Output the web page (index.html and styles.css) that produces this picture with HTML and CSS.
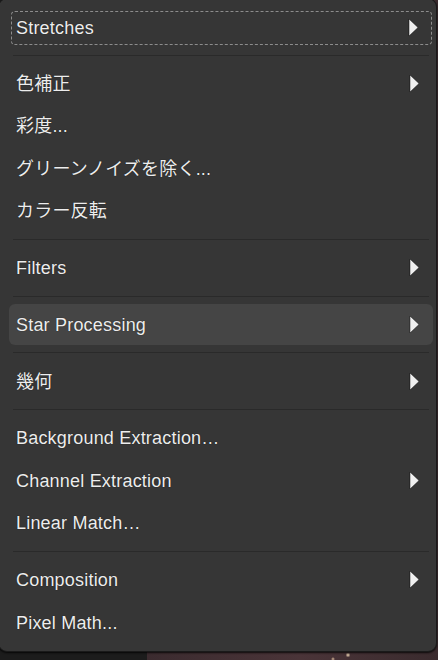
FILE: index.html
```html
<!DOCTYPE html>
<html lang="ja">
<head>
    <meta charset="UTF-8">
    <meta name="viewport" content="width=device-width, initial-scale=1.0">
    <link rel="stylesheet" href="styles.css">
</head>
<body>

    <div class="menu">
        <div class="item focus">
            <span>Stretches</span>
            <svg class="arrow" viewBox="0 0 11 19" width="11" height="19"><polygon points="1,1 10,9.5 1,18"/></svg>
        </div>
        <div class="sep"></div>
        <div class="item">
            <span>色補正</span>
            <svg class="arrow" viewBox="0 0 11 19" width="11" height="19"><polygon points="1,1 10,9.5 1,18"/></svg>
        </div>
        <div class="item"><span>彩度...</span></div>
        <div class="item"><span>グリーンノイズを除く...</span></div>
        <div class="item"><span>カラー反転</span></div>
        <div class="sep"></div>
        <div class="item">
            <span>Filters</span>
            <svg class="arrow" viewBox="0 0 11 19" width="11" height="19"><polygon points="1,1 10,9.5 1,18"/></svg>
        </div>
        <div class="sep"></div>
        <div class="item hover">
            <span>Star Processing</span>
            <svg class="arrow" viewBox="0 0 11 19" width="11" height="19"><polygon points="1,1 10,9.5 1,18"/></svg>
        </div>
        <div class="sep"></div>
        <div class="item">
            <span>幾何</span>
            <svg class="arrow" viewBox="0 0 11 19" width="11" height="19"><polygon points="1,1 10,9.5 1,18"/></svg>
        </div>
        <div class="sep"></div>
        <div class="item"><span>Background Extraction…</span></div>
        <div class="item">
            <span>Channel Extraction</span>
            <svg class="arrow" viewBox="0 0 11 19" width="11" height="19"><polygon points="1,1 10,9.5 1,18"/></svg>
        </div>
        <div class="item"><span>Linear Match…</span></div>
        <div class="sep"></div>
        <div class="item">
            <span>Composition</span>
            <svg class="arrow" viewBox="0 0 11 19" width="11" height="19"><polygon points="1,1 10,9.5 1,18"/></svg>
        </div>
        <div class="item"><span>Pixel Math...</span></div>
    </div>

</body>
</html>
```

FILE: styles.css
```css
html,
body {
    height: 100%;
}

body {
    margin: 0;
    overflow: hidden;
    font-family: "Liberation Sans", "Noto Sans CJK JP", sans-serif;
    /* photo peeking out under the menu */
    background:
        radial-gradient(circle at 348px 655px, #f2d9b8 0, rgba(242, 217, 184, 0) 2.5px),
        radial-gradient(circle at 333px 659px, #d9b89a 0, rgba(217, 184, 154, 0) 2px),
        linear-gradient(to right, #1c1c1c 147px, #3b2b2f 147px, #4a3438 300px, #3a2b2e);
}

.menu {
    margin: -2px 1px 0 -2px;
    padding: 6.6px 3px 7.4px 10px;
    border: 1px solid #1a1a1a;
    border-radius: 9px;
    background-color: #363636;
    box-shadow: 0 1px 2px rgba(0, 0, 0, 0.8);
}

.item {
    display: flex;
    align-items: center;
    justify-content: space-between;
    box-sizing: border-box;
    height: 42.5px;
    padding: 0 13px 0 7px;
    font-size: 18px;
    line-height: 1;
    letter-spacing: 0.2px;
    color: #ededed;
    text-shadow: 0 0 1px rgba(0, 0, 0, 0.7);
}

.item span {
    padding-top: 0.5px;
}

/* keyboard focus ring on the first entry */
.focus {
    height: 34px;
    margin: 5.4px 1px 3.1px 2px;
    padding: 0 12px 0 4px;
    border: 1px dashed #8c8c8c;
    border-radius: 4px;
}

.hover {
    height: 40.5px;
    margin: 1px 0;
    border-radius: 6px;
    background-color: #454545;
}

.arrow polygon {
    fill: #f0f0f0;
    stroke: rgba(0, 0, 0, 0.45);
    stroke-width: 1;
}

.sep {
    height: 14.25px;
    margin: 0 4px;
    background: linear-gradient(#2a2a2a, #2a2a2a) no-repeat center / 100% 1px;
}
```
